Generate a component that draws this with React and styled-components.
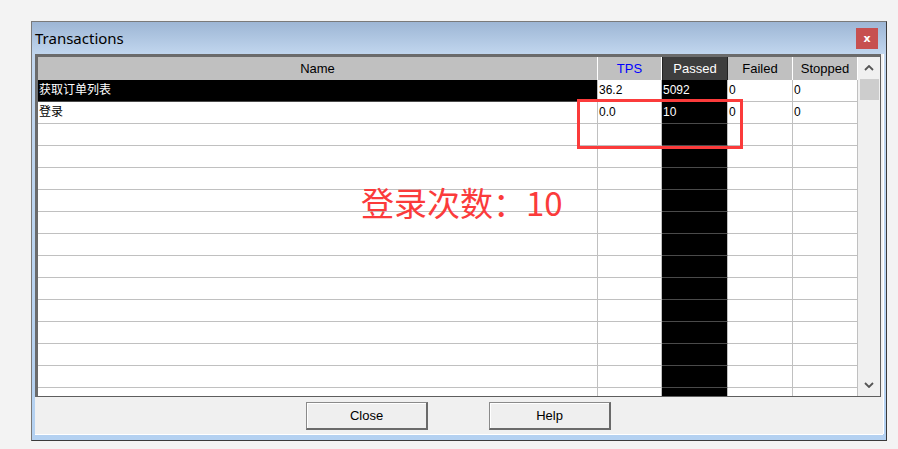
import React from 'react';
import styled, {createGlobalStyle} from 'styled-components';

const Global = createGlobalStyle`
  body {
    margin: 0;
    background: #f3f3f3;
    font-family: "Liberation Sans", Arial, sans-serif;
  }
`;

const Page = styled.div`
  padding: 21px 0 0 31px;
`;

const Window = styled.div`
  width: 856px;
  height: 420px;
  box-sizing: border-box;
  border: 1px solid #7a7a7a;
  border-right-color: #3a3a3a;
  border-bottom-color: #3a3a3a;
  background: linear-gradient(to bottom, #9db6d5 0px, #c1d6ee 32px, #b4d1f1 100%);
  padding: 0 3px 6px 3px;
  display: flex;
  flex-direction: column;
`;

const TitleBar = styled.div`
  height: 32px;
  flex-shrink: 0;
  display: flex;
  align-items: flex-start;
  justify-content: space-between;
`;

const Title = styled.div`
  font-family: "Noto Sans", "Open Sans", sans-serif;
  font-size: 15px;
  line-height: 33px;
  color: #000;
`;

const CloseX = styled.div`
  width: 22px;
  height: 21px;
  margin: 6px 5px 0 0;
  background: #c75050;
  color: #fff;
  font: bold 11px "DejaVu Sans", sans-serif;
  display: flex;
  align-items: center;
  justify-content: center;
`;

const Client = styled.div`
  flex: 1;
  background: #f0f0f0;
  box-shadow: 0 1px 0 #fff, 1px 0 0 #fff;
  display: flex;
  flex-direction: column;
`;

const GridPanel = styled.div`
  position: relative;
  width: 846px;
  height: 343px;
  box-sizing: border-box;
  border-top: 3px solid #6b6b6b;
  border-left: 3px solid #6b6b6b;
  border-right: 1px solid #5e5e5e;
  border-bottom: 1px solid #5e5e5e;
  background: #fff;
  display: flex;
  overflow: hidden;
`;

const Table = styled.div`
  width: 820px;
  display: flex;
  flex-direction: column;
`;

const HeaderRow = styled.div`
  display: flex;
  height: 23px;
  flex-shrink: 0;
`;

const HeadCell = styled.div`
  width: ${p => p.$w}px;
  box-sizing: border-box;
  background: ${p => (p.$dark ? '#3e3e3e' : '#c0c0c0')};
  color: ${p => p.$color || (p.$dark ? '#fff' : '#000')};
  border-right: 1px solid ${p => (p.$dark ? '#222' : '#fff')};
  border-left: ${p => (p.$dark ? '1px solid #222' : 'none')};
  font-size: 13px;
  line-height: 23px;
  text-align: center;
`;

const Row = styled.div`
  display: flex;
  height: 22px;
  flex-shrink: 0;
`;

const Cell = styled.div`
  width: ${p => p.$w}px;
  box-sizing: border-box;
  background: ${p => (p.$dark ? '#000' : '#fff')};
  color: ${p => (p.$dark ? '#fff' : '#000')};
  border-right: 1px solid #c0c0c0;
  border-bottom: 1px solid ${p => (p.$dark ? '#4a4a4a' : '#c0c0c0')};
  font-family: "Liberation Sans", "Noto Sans CJK SC", sans-serif;
  font-size: 12px;
  line-height: 21px;
  padding-left: 1px;
  white-space: nowrap;
  overflow: hidden;
`;

const Scrollbar = styled.div`
  width: 22px;
  background: #f0f0f0;
  display: flex;
  flex-direction: column;
`;

const ArrowBtn = styled.div`
  height: ${p => p.$h}px;
  display: flex;
  align-items: center;
  justify-content: center;
  margin-top: ${p => (p.$bottom ? 'auto' : '0')};
`;

const Thumb = styled.div`
  height: 21px;
  margin-left: 2px;
  width: 19px;
  background: #cdcdcd;
`;

const Highlight = styled.div`
  position: absolute;
  left: 539px;
  top: 42px;
  width: 166px;
  height: 50px;
  box-sizing: border-box;
  border: 3px solid #fb3b3b;
`;

const Note = styled.div`
  position: absolute;
  left: 323px;
  top: 125px;
  font-family: "Noto Sans CJK SC", sans-serif;
  font-size: 33px;
  line-height: 40px;
  color: #fb3b3b;
  white-space: nowrap;
`;

const ButtonBar = styled.div`
  flex: 1;
  display: flex;
  align-items: center;
  justify-content: center;
  gap: 61px;
  padding-right: 1px;
`;

const Button = styled.button`
  width: 122px;
  height: 28px;
  box-sizing: border-box;
  background: #efefef;
  border: 1px solid #8a8a8a;
  border-right: 2px solid #6a6a6a;
  border-bottom: 2px solid #6a6a6a;
  box-shadow: inset 1px 1px 0 #fff;
  font-family: "Liberation Sans", Arial, sans-serif;
  font-size: 13px;
  color: #000;
  padding: 0;
`;

const Chevron = ({up}) => (
  <svg width="10" height="6" viewBox="0 0 10 6">
    <polyline
      points={up ? '1,5 5,1 9,5' : '1,1 5,5 9,1'}
      fill="none"
      stroke="#555"
      strokeWidth="1.8"
    />
  </svg>
);

const columns = [
  {key: 'name', label: 'Name', w: 560},
  {key: 'tps', label: 'TPS', w: 64, color: '#0000ff'},
  {key: 'passed', label: 'Passed', w: 66, dark: true},
  {key: 'failed', label: 'Failed', w: 65},
  {key: 'stopped', label: 'Stopped', w: 65},
];

const data = [
  {name: '获取订单列表', tps: '36.2', passed: '5092', failed: '0', stopped: '0', selected: true},
  {name: '登录', tps: '0.0', passed: '10', failed: '0', stopped: '0'},
];

const rows = [...data];
while (rows.length < 15) rows.push({});

const App = () => {
  return (
    <Page>
      <Global />
      <Window>
        <TitleBar>
          <Title>Transactions</Title>
          <CloseX>x</CloseX>
        </TitleBar>
        <Client>
          <GridPanel>
            <Table>
              <HeaderRow>
                {columns.map(c => (
                  <HeadCell key={c.key} $w={c.w} $dark={c.dark} $color={c.color}>
                    {c.label}
                  </HeadCell>
                ))}
              </HeaderRow>
              {rows.map((r, i) => (
                <Row key={i}>
                  {columns.map(c => (
                    <Cell
                      key={c.key}
                      $w={c.w}
                      $dark={c.dark || (r.selected && c.key === 'name')}
                    >
                      {r[c.key]}
                    </Cell>
                  ))}
                </Row>
              ))}
            </Table>
            <Scrollbar>
              <ArrowBtn $h={22}><Chevron up /></ArrowBtn>
              <Thumb />
              <ArrowBtn $h={22} $bottom><Chevron /></ArrowBtn>
            </Scrollbar>
            <Highlight />
            <Note>登录次数：10</Note>
          </GridPanel>
          <ButtonBar>
            <Button>Close</Button>
            <Button>Help</Button>
          </ButtonBar>
        </Client>
      </Window>
    </Page>
  );
};

export default App;
